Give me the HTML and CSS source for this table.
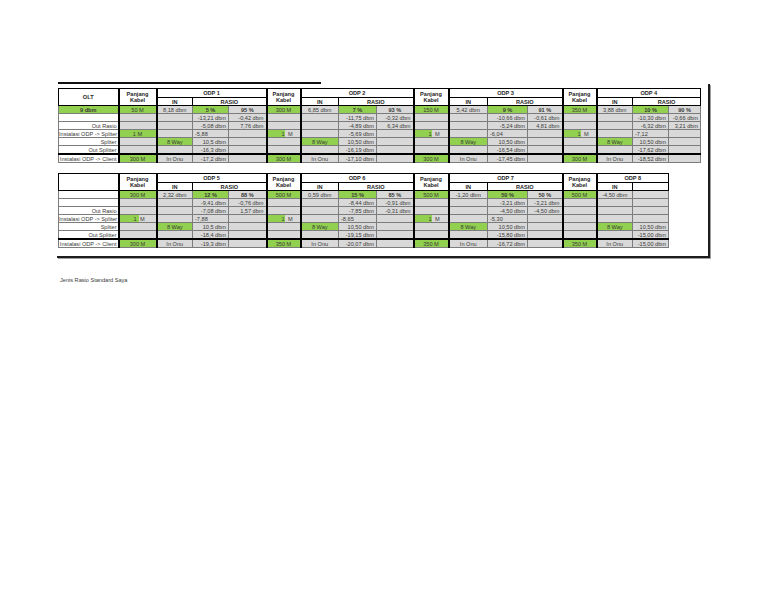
FILE: index.html
```html
<!DOCTYPE html>
<html>
<head>
<meta charset="utf-8">
<title>Rasio ODP</title>
<link rel="stylesheet" href="styles.css">
</head>
<body>
<div class="topline"></div>
<div class="frame">
<table class="t t1">
<colgroup><col class="c60"><col class="c38"><col class="c36"><col class="c36"><col class="c38"><col class="c34"><col class="c38"><col class="c38"><col class="c37"><col class="c35"><col class="c39"><col class="c40"><col class="c35"><col class="c34"><col class="c36"><col class="c36"><col class="c32"></colgroup>
<tr class="h1">
<th rowspan="2" class="lbl">OLT</th><th rowspan="2" class="pk">Panjang<br>Kabel</th><th colspan="3">ODP 1</th>
<th rowspan="2" class="pk">Panjang<br>Kabel</th><th colspan="3">ODP 2</th>
<th rowspan="2" class="pk">Panjang<br>Kabel</th><th colspan="3">ODP 3</th>
<th rowspan="2" class="pk">Panjang<br>Kabel</th><th colspan="3">ODP 4</th>
</tr>
<tr class="h2">
<th>IN</th><th colspan="2">RASIO</th><th>IN</th><th colspan="2">RASIO</th><th>IN</th><th colspan="2">RASIO</th><th>IN</th><th colspan="2">RASIO</th>
</tr>
<tr>
<td class="g c b">9 dbm</td><td class="g c pk">50 M</td><td class="s c">8,18 dbm</td><td class="g c b">5 %</td><td class="s c b">95 %</td>
<td class="g c pk">300 M</td><td class="s c">6,85 dbm</td><td class="g c b">7 %</td><td class="s c b">93 %</td>
<td class="g c pk">150 M</td><td class="s c">5,42 dbm</td><td class="g c b">9 %</td><td class="s c b">91 %</td>
<td class="g c pk">350 M</td><td class="s c">3,88 dbm</td><td class="g c b">10 %</td><td class="s c b">90 %</td>
</tr>
<tr>
<td class="w"></td><td class="s pk"></td><td class="s"></td><td class="s r">-13,21 dbm</td><td class="s r">-0,42 dbm</td>
<td class="s pk"></td><td class="s"></td><td class="s r">-11,75 dbm</td><td class="s r">-0,32 dbm</td>
<td class="s pk"></td><td class="s"></td><td class="s r">-10,66 dbm</td><td class="s r">-0,61 dbm</td>
<td class="s pk"></td><td class="s"></td><td class="s r">-10,30 dbm</td><td class="s r">-0,66 dbm</td>
</tr>
<tr>
<td class="w r lt">Out Rasio</td><td class="s pk"></td><td class="s"></td><td class="s r">-5,08 dbm</td><td class="s r">7,76 dbm</td>
<td class="s pk"></td><td class="s"></td><td class="s r">-4,89 dbm</td><td class="s r">6,34 dbm</td>
<td class="s pk"></td><td class="s"></td><td class="s r">-5,24 dbm</td><td class="s r">4,81 dbm</td>
<td class="s pk"></td><td class="s"></td><td class="s r">-6,32 dbm</td><td class="s r">3,21 dbm</td>
</tr>
<tr>
<td class="w r lt">Instalasi ODP -&gt; Spliter</td><td class="g c pk">1 M</td><td class="s"></td><td class="s l">-5,88</td><td class="s"></td>
<td class="half pk"><span class="num">1</span> M</td><td class="s"></td><td class="s r">-5,69 dbm</td><td class="s"></td>
<td class="half pk"><span class="num">1</span> M</td><td class="s"></td><td class="s l">-6,04</td><td class="s"></td>
<td class="half pk"><span class="num">1</span> M</td><td class="s"></td><td class="s l">-7,12</td><td class="s"></td>
</tr>
<tr>
<td class="w r lt">Spliter</td><td class="s pk"></td><td class="g c">8 Way</td><td class="s r">10,5 dbm</td><td class="s"></td>
<td class="s pk"></td><td class="g c">8 Way</td><td class="s r">10,50 dbm</td><td class="s"></td>
<td class="s pk"></td><td class="g c">8 Way</td><td class="s r">10,50 dbm</td><td class="s"></td>
<td class="s pk"></td><td class="g c">8 Way</td><td class="s r">10,50 dbm</td><td class="s"></td>
</tr>
<tr>
<td class="w r lt">Out Splitter</td><td class="s pk"></td><td class="s"></td><td class="s r">-16,3 dbm</td><td class="s"></td>
<td class="s pk"></td><td class="s"></td><td class="s r">-16,19 dbm</td><td class="s"></td>
<td class="s pk"></td><td class="s"></td><td class="s r">-16,54 dbm</td><td class="s"></td>
<td class="s pk"></td><td class="s"></td><td class="s r">-17,62 dbm</td><td class="s"></td>
</tr>
<tr class="last">
<td class="w r lt">Instalasi ODP -&gt; Client</td><td class="g c pk">300 M</td><td class="s c">In Onu</td><td class="s r">-17,2 dbm</td><td class="s"></td>
<td class="g c pk">300 M</td><td class="s c">In Onu</td><td class="s r">-17,10 dbm</td><td class="s"></td>
<td class="g c pk">300 M</td><td class="s c">In Onu</td><td class="s r">-17,45 dbm</td><td class="s"></td>
<td class="g c pk">300 M</td><td class="s c">In Onu</td><td class="s r">-18,52 dbm</td><td class="s"></td>
</tr>
</table>

<table class="t t2">
<colgroup><col class="c60"><col class="c38"><col class="c36"><col class="c36"><col class="c38"><col class="c34"><col class="c38"><col class="c38"><col class="c37"><col class="c35"><col class="c39"><col class="c40"><col class="c35"><col class="c34"><col class="c36"><col class="c36"></colgroup>
<tr class="h1">
<th rowspan="2" class="lbl"></th><th rowspan="2" class="pk">Panjang<br>Kabel</th><th colspan="3">ODP 5</th>
<th rowspan="2" class="pk">Panjang<br>Kabel</th><th colspan="3">ODP 6</th>
<th rowspan="2" class="pk">Panjang<br>Kabel</th><th colspan="3">ODP 7</th>
<th rowspan="2" class="pk">Panjang<br>Kabel</th><th colspan="2">ODP 8</th>
</tr>
<tr class="h2">
<th>IN</th><th colspan="2">RASIO</th><th>IN</th><th colspan="2">RASIO</th><th>IN</th><th colspan="2">RASIO</th><th>IN</th><th></th>
</tr>
<tr>
<td class="w"></td><td class="g c pk">300 M</td><td class="s c">2,32 dbm</td><td class="g c b">12 %</td><td class="s c b">88 %</td>
<td class="g c pk">500 M</td><td class="s c">0,59 dbm</td><td class="g c b">15 %</td><td class="s c b">85 %</td>
<td class="g c pk">500 M</td><td class="s c">-1,20 dbm</td><td class="g c b">50 %</td><td class="s c b">50 %</td>
<td class="g c pk">500 M</td><td class="s c">-4,50 dbm</td><td class="s"></td>
</tr>
<tr>
<td class="w"></td><td class="s pk"></td><td class="s"></td><td class="s r">-9,41 dbm</td><td class="s r">-0,76 dbm</td>
<td class="s pk"></td><td class="s"></td><td class="s r">-8,44 dbm</td><td class="s r">-0,91 dbm</td>
<td class="s pk"></td><td class="s"></td><td class="s r">-3,21 dbm</td><td class="s r">-3,21 dbm</td>
<td class="s pk"></td><td class="s"></td><td class="s"></td>
</tr>
<tr>
<td class="w r lt">Out Rasio</td><td class="s pk"></td><td class="s"></td><td class="s r">-7,08 dbm</td><td class="s r">1,57 dbm</td>
<td class="s pk"></td><td class="s"></td><td class="s r">-7,85 dbm</td><td class="s r">-0,31 dbm</td>
<td class="s pk"></td><td class="s"></td><td class="s r">-4,50 dbm</td><td class="s r">-4,50 dbm</td>
<td class="s pk"></td><td class="s"></td><td class="s"></td>
</tr>
<tr>
<td class="w r lt">Instalasi ODP -&gt; Spliter</td><td class="half pk"><span class="num">1</span> M</td><td class="s"></td><td class="s l">-7,88</td><td class="s"></td>
<td class="half pk"><span class="num">1</span> M</td><td class="s"></td><td class="s l">-8,65</td><td class="s"></td>
<td class="half pk"><span class="num">1</span> M</td><td class="s"></td><td class="s l">-5,30</td><td class="s"></td>
<td class="s pk"></td><td class="s"></td><td class="s"></td>
</tr>
<tr>
<td class="w r lt">Spliter</td><td class="s pk"></td><td class="g c">8 Way</td><td class="s r">10,5 dbm</td><td class="s"></td>
<td class="s pk"></td><td class="g c">8 Way</td><td class="s r">10,50 dbm</td><td class="s"></td>
<td class="s pk"></td><td class="g c">8 Way</td><td class="s r">10,50 dbm</td><td class="s"></td>
<td class="s pk"></td><td class="g c">8 Way</td><td class="s r">10,50 dbm</td>
</tr>
<tr>
<td class="w r lt">Out Splitter</td><td class="s pk"></td><td class="s"></td><td class="s r">-18,4 dbm</td><td class="s"></td>
<td class="s pk"></td><td class="s"></td><td class="s r">-19,15 dbm</td><td class="s"></td>
<td class="s pk"></td><td class="s"></td><td class="s r">-15,80 dbm</td><td class="s"></td>
<td class="s pk"></td><td class="s"></td><td class="s r">-15,00 dbm</td>
</tr>
<tr class="last">
<td class="w r lt">Instalasi ODP -&gt; Client</td><td class="g c pk">300 M</td><td class="s c">In Onu</td><td class="s r">-19,3 dbm</td><td class="s"></td>
<td class="g c pk">350 M</td><td class="s c">In Onu</td><td class="s r">-20,07 dbm</td><td class="s"></td>
<td class="g c pk">350 M</td><td class="s c">In Onu</td><td class="s r">-16,72 dbm</td><td class="s"></td>
<td class="g c pk">350 M</td><td class="s c">In Onu</td><td class="s r">-15,00 dbm</td>
</tr>
</table>
</div>
<p class="note">Jenis Rasio Standard Saya</p>
</body>
</html>
```

FILE: styles.css
```css
html, body {
  margin: 0;
  padding: 0;
  background: #ffffff;
}
body {
  font-family: "Liberation Sans", Arial, sans-serif;
  color: #3a3a3a;
}
.topline {
  margin: 82px 0 0 58px;
  width: 263px;
  height: 2px;
  background: #111111;
}
.frame {
  margin-left: 57px;
  width: 650px;
  padding: 4px 0 8px 1px;
  border-right: 2px solid #1c1c1c;
  border-bottom: 2px solid #1c1c1c;
  box-shadow: 1px 1px 0 #a0a0a0;
}
.t {
  border-collapse: collapse;
  table-layout: fixed;
  border: 1px solid #000;
  font-size: 5.6px;
  line-height: 6px;
}
.t1 { width: 642px; }
.t2 { width: 610px; margin-top: 10px; }
.c60 { width: 60px; }
.c40 { width: 40px; }
.c39 { width: 39px; }
.c38 { width: 38px; }
.c37 { width: 37px; }
.c36 { width: 36px; }
.c35 { width: 35px; }
.c34 { width: 34px; }
.c32 { width: 32px; }
.t th, .t td {
  padding: 0 2px;
  height: 7px;
  border: 1px solid #7c7c7c;
  white-space: nowrap;
  overflow: hidden;
  vertical-align: middle;
}
.t th {
  background: #ffffff;
  font-weight: bold;
  color: #262626;
  border-color: #000;
  text-align: center;
}
.t .h1 th { height: 8px; }
.t .h2 th { height: 7px; border-bottom: 1px solid #000; }
.t .lbl { border-right: 2px solid #000; }
.t .pk { border-left: 2px solid #000; border-right: 2px solid #000; }
.t .last td { border-top: 2px solid #000; }
.t .lt { padding: 0 1px 0 0; }
.g { background: #92d050; }
.s { background: #d9d9d9; }
.w { background: #ffffff; }
.half {
  background: linear-gradient(to right, #92d050 0, #92d050 52%, #d9d9d9 52%, #d9d9d9 100%);
  text-align: left;
}
.t .half { padding-left: 0; }
.half .num {
  display: inline-block;
  width: 17px;
  text-align: right;
  margin-right: 2px;
}
.c { text-align: center; }
.r { text-align: right; }
.l { text-align: left; }
.b { font-weight: bold; }
.note {
  margin: 19px 0 0 60px;
  font-size: 5.6px;
  line-height: 6px;
  color: #3a3a3a;
}
```
